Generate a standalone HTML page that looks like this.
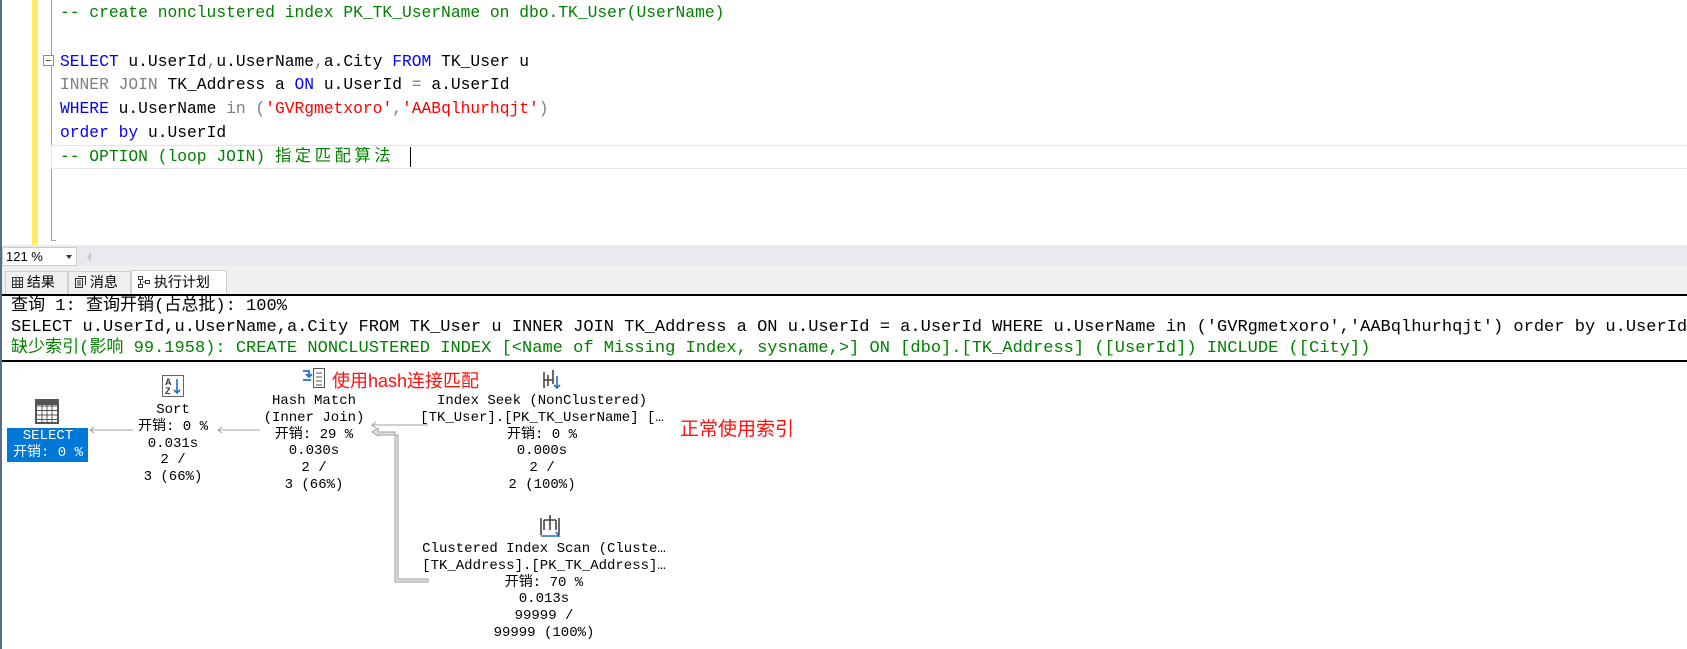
<!DOCTYPE html>
<html><head><meta charset="utf-8"><style>
*{margin:0;padding:0;box-sizing:border-box}
body{width:1687px;height:649px;overflow:hidden;background:#fff;position:relative;font-family:"Liberation Mono","Noto Sans CJK SC",monospace}
.a{position:absolute;white-space:pre}
.code{font-size:16.3px;line-height:24px;height:24px}
.k{color:#0000ff}.g{color:#808080}.s{color:#ff0000}.c{color:#008000}
.res{font-size:17.05px;line-height:21px;left:11px}
.n{position:absolute;width:360px;text-align:center;font-size:14px;line-height:16.8px;color:#000}
.red{color:#ff1010;font-family:"Liberation Sans","Noto Sans CJK SC",sans-serif}
.tab{position:absolute;white-space:nowrap;font-family:'Liberation Sans','Noto Sans CJK SC',sans-serif;font-size:14px;padding-left:6px}
</style></head><body>
<div class="a" style="left:0;top:0;width:2px;height:649px;background:#5a6a8a"></div>
<div class="a" style="left:32px;top:0;width:6px;height:245px;background:#ffee62"></div>
<div class="a" style="left:51px;top:0;width:1px;height:241px;background:#a0a0a0"></div>
<div class="a" style="left:51px;top:240px;width:5px;height:1px;background:#a0a0a0"></div>
<div class="a" style="left:43px;top:55px;width:11px;height:11px;border:1px solid #909090;background:#fff"></div>
<div class="a" style="left:46px;top:60px;width:5px;height:1px;background:#555"></div>
<div class="a" style="left:51px;top:145px;width:1636px;height:24px;border:1px solid #e4e4e4;border-right:none"></div>
<div class="a code c" style="left:60px;top:1px">-- create nonclustered index PK_TK_UserName on dbo.TK_User(UserName)</div>
<div class="a code" style="left:60px;top:50px"><span class="k">SELECT</span> u.UserId<span class="g">,</span>u.UserName<span class="g">,</span>a.City <span class="k">FROM</span> TK_User u</div>
<div class="a code" style="left:60px;top:73px"><span class="g">INNER JOIN</span> TK_Address a <span class="k">ON</span> u.UserId <span class="g">=</span> a.UserId</div>
<div class="a code" style="left:60px;top:97px"><span class="k">WHERE</span> u.UserName <span class="g">in (</span><span class="s">'GVRgmetxoro'</span><span class="g">,</span><span class="s">'AABqlhurhqjt'</span><span class="g">)</span></div>
<div class="a code" style="left:60px;top:121px"><span class="k">order by</span> u.UserId</div>
<div class="a code c" style="left:60px;top:145px">-- OPTION (loop JOIN) <span style="letter-spacing:3.6px">指定匹配算法</span></div>
<div class="a" style="left:410px;top:147px;width:1px;height:20px;background:#000"></div>
<div class="a" style="left:2px;top:245px;width:1685px;height:21px;background:#e9e9ee"></div>
<div class="a" style="left:2px;top:247px;width:75px;height:19px;background:#fff;border:1px solid #ccc;font-family:'Liberation Sans',sans-serif;font-size:13px;line-height:17px;padding-left:3px">121 %</div>
<div class="a" style="left:66px;top:255px;border-left:3px solid transparent;border-right:3px solid transparent;border-top:4px solid #333"></div>
<div class="a" style="left:87px;top:252px;border-top:5px solid transparent;border-bottom:5px solid transparent;border-right:4px solid #c8c8c8"></div>
<div class="a" style="left:2px;top:266px;width:1685px;height:28px;background:#f0f0f0"></div>
<div class="tab" style="left:5px;top:271px;width:63px;height:23px;border:1px solid #d0d0d0;border-bottom:none;line-height:21px"><svg width="11" height="11" style="vertical-align:-1px" viewBox="0 0 11 11"><rect x=".5" y=".5" width="10" height="10" fill="none" stroke="#333"/><path d="M0 4H11M0 7.5H11M4 0V11M7.5 0V11" stroke="#333"/></svg> 结果</div>
<div class="tab" style="left:68px;top:271px;width:63px;height:23px;border:1px solid #d0d0d0;border-bottom:none;line-height:21px"><svg width="11" height="12" style="vertical-align:-1px" viewBox="0 0 11 12"><rect x=".5" y="2.5" width="7" height="9" fill="none" stroke="#333"/><path d="M3 .5H10.5V9M2 5H6M2 7H6M2 9H6" stroke="#333" fill="none"/></svg> 消息</div>
<div class="tab" style="left:131px;top:270px;width:96px;height:25px;background:#fff;border:1px solid #ccc;border-bottom:none;line-height:22px"><svg width="12" height="12" style="vertical-align:-1px" viewBox="0 0 12 12"><rect x=".5" y=".5" width="4" height="3" fill="none" stroke="#333"/><rect x="7.5" y="4.5" width="4" height="3" fill="none" stroke="#333"/><rect x=".5" y="8.5" width="4" height="3" fill="none" stroke="#333"/><path d="M2.5 3.5V8.5M4.5 6H7.5" stroke="#333"/></svg> 执行计划</div>
<div class="a" style="left:2px;top:294px;width:1685px;height:2px;background:#000"></div>
<div class="a res" style="top:296px">查询 1: 查询开销(占总批): 100%</div>
<div class="a res" style="top:317px">SELECT u.UserId,u.UserName,a.City FROM TK_User u INNER JOIN TK_Address a ON u.UserId = a.UserId WHERE u.UserName in ('GVRgmetxoro','AABqlhurhqjt') order by u.UserId</div>
<div class="a res c" style="top:338px">缺少索引(影响 99.1958): CREATE NONCLUSTERED INDEX [&lt;Name of Missing Index, sysname,&gt;] ON [dbo].[TK_Address] ([UserId]) INCLUDE ([City])</div>
<div class="a" style="left:2px;top:360px;width:1685px;height:2px;background:#000"></div>
<svg class="a" style="left:0;top:360px" width="700" height="289">
<g stroke="#a0a0a0" fill="none">
<path d="M133 70H90M94 67L90 70L94 73"/>
<path d="M260 70H218M222 67L218 70L222 73"/>
<path d="M428 65H372M376 62L372 65L376 68"/>
</g>
<path d="M428 222H395V72H378V68L372 72L378 76V75H398V219H428Z" fill="#e0e0e0" stroke="#a0a0a0"/>
<rect x="36" y="40" width="22" height="23" fill="#fff" stroke="#555" stroke-width="2"/>
<path d="M37 46H57M37 50.5H57M37 55H57M37 59.5H57M42 44V62M47 44V62M52 44V62" stroke="#555"/>
<rect x="36" y="40" width="22" height="5" fill="#555"/>
<rect x="162.5" y="15.5" width="21" height="21" fill="#fff" stroke="#666"/>
<text x="165" y="25" font-size="9" font-family="Liberation Sans" font-weight="bold" fill="#333">A</text>
<text x="165" y="34" font-size="9" font-family="Liberation Sans" font-weight="bold" fill="#333">Z</text>
<path d="M177 19V33M174 30L177 33L180 30" stroke="#1e6fc8" stroke-width="1.6" fill="none"/>
<rect x="313.5" y="8.5" width="11" height="19" fill="#fff" stroke="#555"/>
<path d="M316 13H322M316 17H322M316 21H322M316 25H322" stroke="#555"/>
<path d="M303 11H309V17M306 14L309 17L312 14M303 20H311" stroke="#1e6fc8" stroke-width="1.8" fill="none"/>
<path d="M544 12V28M548 15V26M553 10V24M544 20H553" stroke="#444" stroke-width="1.6" fill="none"/>
<path d="M557 16V28M554 25L557 28L560 25" stroke="#1e6fc8" stroke-width="1.6" fill="none"/>
<path d="M550 155V170M544 160H556M544 160V170M556 160V170M541 158V175M559 158V175" stroke="#444" stroke-width="1.6" fill="none"/>
<path d="M541 176H559L556 172" stroke="#1e6fc8" stroke-width="1.6" fill="none"/>
</svg>
<div class="a" style="left:7px;top:428px;width:81px;height:34px;background:#0078d7"></div>
<div class="n" style="left:-132px;top:428px;color:#fff">SELECT<br>开销: 0 %</div>
<div class="n" style="left:-7px;top:402px">Sort<br>开销: 0 %<br>0.031s<br>2 /<br>3 (66%)</div>
<div class="n" style="left:134px;top:393px">Hash Match<br>(Inner Join)<br>开销: 29 %<br>0.030s<br>2 /<br>3 (66%)</div>
<div class="n" style="left:362px;top:393px">Index Seek (NonClustered)<br>[TK_User].[PK_TK_UserName] […<br>开销: 0 %<br>0.000s<br>2 /<br>2 (100%)</div>
<div class="n" style="left:364px;top:541px">Clustered Index Scan (Cluste…<br>[TK_Address].[PK_TK_Address]…<br>开销: 70 %<br>0.013s<br>99999 /<br>99999 (100%)</div>
<div class="a red" style="left:332px;top:369px;font-size:18px;line-height:24px">使用hash连接匹配</div>
<div class="a red" style="left:680px;top:418px;font-size:19px;line-height:24px">正常使用索引</div>
</body></html>
